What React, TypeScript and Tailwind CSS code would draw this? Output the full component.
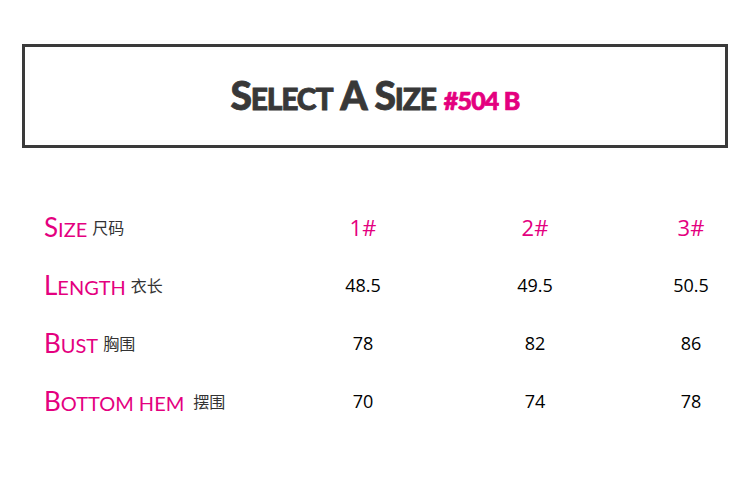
const rows = [
  { cap: 'S', rest: 'IZE', zh: '尺码', values: ['1#', '2#', '3#'], head: true },
  { cap: 'L', rest: 'ENGTH', zh: '衣长', values: ['48.5', '49.5', '50.5'] },
  { cap: 'B', rest: 'UST', zh: '胸围', values: ['78', '82', '86'] },
  { cap: 'B', rest: 'OTTOM HEM', zh: '摆围', values: ['70', '74', '78'], wide: true },
];

export default function App() {
  return (
    <div className="w-[750px] h-[492px] bg-white overflow-hidden font-['Open_Sans',sans-serif]">
      {/* Title box */}
      <div className="mx-[22px] mt-[44px] h-[104px] border-[3px] border-[#3a3a3a] flex items-center justify-center">
        <div className="flex items-baseline -mt-[2px] font-['Lato',sans-serif] font-black text-[#383838] tracking-[-1.2px] [-webkit-text-stroke:0.8px_#383838]">
          <span className="text-[39px] leading-none">S</span>
          <span className="text-[30px] leading-none">ELECT</span>
          <span className="text-[39px] leading-none ml-[8px]">A</span>
          <span className="text-[39px] leading-none ml-[8px]">S</span>
          <span className="text-[30px] leading-none">IZE</span>
          <span className="text-[25px] leading-none ml-[8px] text-[#e4007f] tracking-[-0.8px] [-webkit-text-stroke:0.7px_#e4007f]">#504 B</span>
        </div>
      </div>

      {/* Size table */}
      <div className="mt-[50px] ml-[44px] grid grid-cols-[246px_146px_198px_114px]">
        {rows.map((r, i) => (
          <div key={i} className="contents">
            <div className="h-[58px] flex items-center">
              <span className="flex items-baseline font-['Lato',sans-serif] text-[#e4007f]">
                <span className="text-[26px] leading-none">{r.cap}</span>
                <span className="text-[20px] leading-none">{r.rest}</span>
              </span>
              <span
                className={
                  r.wide
                    ? 'ml-[9px] text-[16px] text-[#333] font-["Noto_Sans_CJK_SC",sans-serif]'
                    : 'ml-[5px] text-[16px] text-[#333] font-["Noto_Sans_CJK_SC",sans-serif]'
                }
              >
                {r.zh}
              </span>
            </div>
            {r.values.map((v) => (
              <div
                key={v}
                className={
                  r.head
                    ? 'h-[58px] flex items-center justify-center text-[22px] text-[#e4007f]'
                    : 'h-[58px] flex items-center justify-center text-[18px] text-black'
                }
              >
                {v}
              </div>
            ))}
          </div>
        ))}
      </div>
    </div>
  );
}
